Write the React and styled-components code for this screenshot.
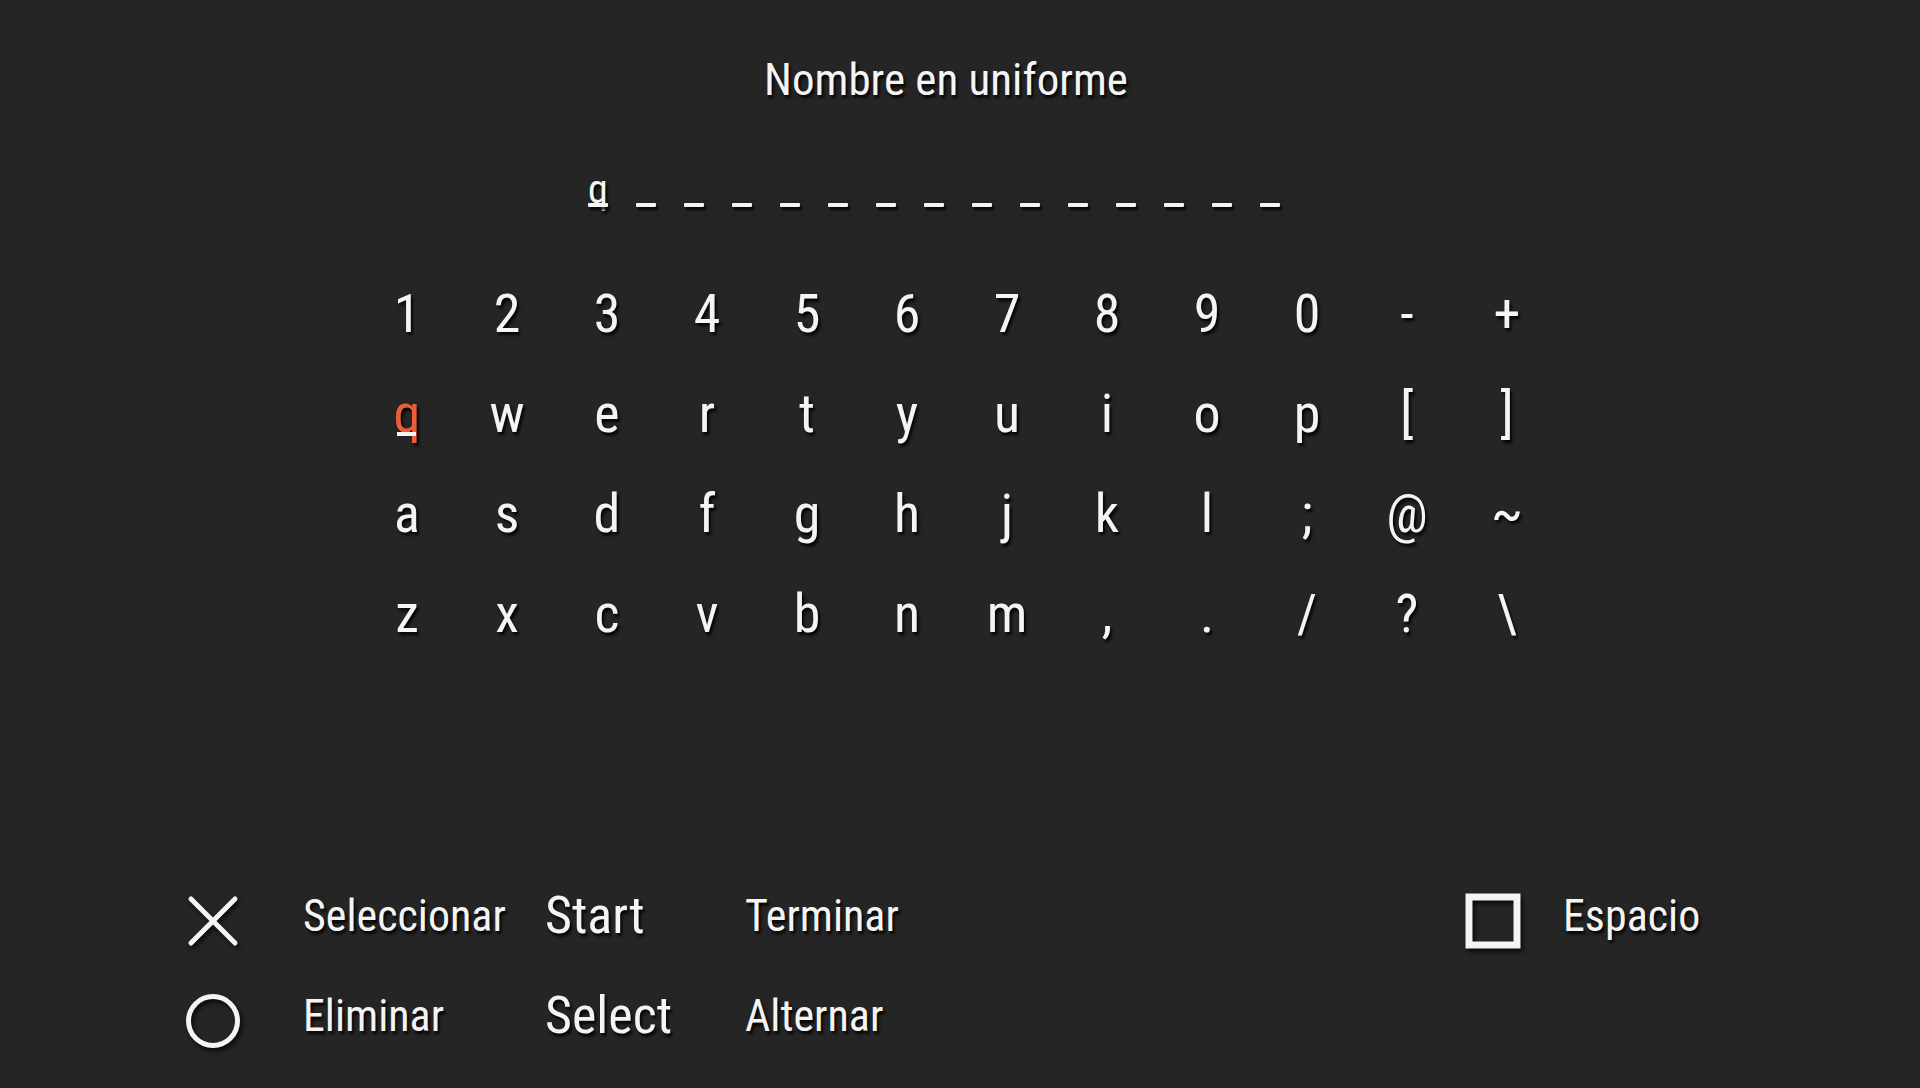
import React from 'react'
import styled, { createGlobalStyle } from 'styled-components'

const Global = createGlobalStyle`
  html, body {
    margin: 0;
    padding: 0;
    background: #252525;
  }
  body {
    font-family: "Roboto Condensed", "Liberation Sans Narrow", Roboto, sans-serif;
    color: #f4f4f4;
  }
`

const rows = [
  ['1', '2', '3', '4', '5', '6', '7', '8', '9', '0', '-', '+'],
  ['q', 'w', 'e', 'r', 't', 'y', 'u', 'i', 'o', 'p', '[', ']'],
  ['a', 's', 'd', 'f', 'g', 'h', 'j', 'k', 'l', ';', '@', '~'],
  ['z', 'x', 'c', 'v', 'b', 'n', 'm', ',', '.', '/', '?', '\\'],
]

const typed = 'q'
const maxLen = 15

const shadow = '2px 3px 3px rgba(0, 0, 0, 0.9)'

const Page = styled.div`
  width: 1920px;
  height: 1088px;
  overflow: hidden;
  display: flex;
  flex-direction: column;
  background: #252525;
`

const Title = styled.h1`
  margin: 57px 0 0;
  padding-right: 28px;
  font-size: 45px;
  font-weight: 400;
  line-height: 1;
  text-align: center;
  text-shadow: ${shadow};
`

const Entry = styled.div`
  display: flex;
  margin: 58px 0 0 574px;
`

const Slot = styled.span`
  position: relative;
  width: 48px;
  height: 60px;
  font-size: 40px;
  line-height: 60px;
  text-align: center;
  text-shadow: ${shadow};

  &::after {
    content: '';
    position: absolute;
    left: 14px;
    top: 43px;
    width: 20px;
    height: 4px;
    border-radius: 1px;
    background: #f4f4f4;
    box-shadow: ${shadow};
  }
`

const Keyboard = styled.div`
  display: grid;
  grid-template-columns: repeat(12, 100px);
  grid-auto-rows: 100px;
  margin: 44px 0 0 357px;
`

const Key = styled.span`
  position: relative;
  font-size: 54px;
  line-height: 100px;
  text-align: center;
  color: ${p => (p.$active ? '#ea5f38' : '#f4f4f4')};
  text-shadow: ${shadow};

  &::after {
    content: '';
    display: ${p => (p.$active ? 'block' : 'none')};
    position: absolute;
    left: 40px;
    top: 68px;
    width: 19px;
    height: 4px;
    background: #f4f4f4;
  }
`

const Footer = styled.div`
  display: grid;
  grid-template-columns: 118px 242px 200px 720px 98px auto;
  grid-auto-rows: 100px;
  align-items: center;
  margin: 207px 0 0 185px;
`

const Icon = styled.svg`
  width: 56px;
  height: 56px;
  display: block;
  filter: drop-shadow(2px 3px 2px rgba(0, 0, 0, 0.8));
`

const Label = styled.span`
  font-size: ${p => (p.$big ? '52px' : '44px')};
  line-height: 1;
  padding-bottom: 10px;
  white-space: nowrap;
  text-shadow: ${shadow};
`

const Empty = styled.span``

const CrossIcon = () => (
  <Icon viewBox="0 0 56 56">
    <path d="M6 6 L50 50 M50 6 L6 50" stroke="#f4f4f4" strokeWidth="5" strokeLinecap="round" fill="none" />
  </Icon>
)

const CircleIcon = () => (
  <Icon viewBox="0 0 56 56">
    <circle cx="28" cy="28" r="24.5" stroke="#f4f4f4" strokeWidth="5" fill="none" />
  </Icon>
)

const SquareIcon = () => (
  <Icon viewBox="0 0 56 56">
    <rect x="4" y="4" width="48" height="48" stroke="#f4f4f4" strokeWidth="7" fill="none" />
  </Icon>
)

export default function App() {
  const slots = Array.from({ length: maxLen }, (_, i) => typed[i] || '')

  return (
    <>
      <Global />
      <Page>
        <Title>Nombre en uniforme</Title>

        <Entry>
          {slots.map((ch, i) => (
            <Slot key={i}>{ch}</Slot>
          ))}
        </Entry>

        <Keyboard>
          {rows.flat().map((k, i) => (
            <Key key={i} $active={i === 12}>{k}</Key>
          ))}
        </Keyboard>

        <Footer>
          <CrossIcon />
          <Label>Seleccionar</Label>
          <Label $big>Start</Label>
          <Label>Terminar</Label>
          <SquareIcon />
          <Label>Espacio</Label>

          <CircleIcon />
          <Label>Eliminar</Label>
          <Label $big>Select</Label>
          <Label>Alternar</Label>
          <Empty />
          <Empty />
        </Footer>
      </Page>
    </>
  )
}
